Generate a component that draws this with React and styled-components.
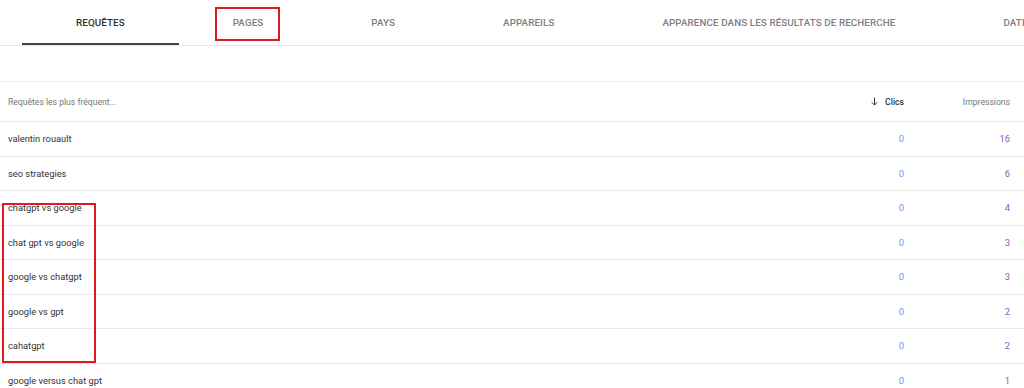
import React from "react";
import styled, { createGlobalStyle } from "styled-components";

const Global = createGlobalStyle`
  html, body { margin: 0; padding: 0; background: #fff; }
  body { font-family: Roboto, "Liberation Sans", Arial, sans-serif; color: #333; overflow: hidden; }
`;

const Page = styled.div`
  position: relative;
  width: 1024px;
  height: 388px;
  overflow: hidden;
  background: #fff;
`;

const TabBar = styled.div`
  display: flex;
  height: 45px;
  padding-left: 22px;
  border-bottom: 1px solid #e6e6e6;
  white-space: nowrap;
  overflow: hidden;
`;

const Tab = styled.div`
  flex: none;
  display: flex;
  align-items: center;
  justify-content: center;
  padding: 0 54px;
  font-size: 9.8px;
  font-weight: 500;
  letter-spacing: 0.1px;
  text-transform: uppercase;
  color: ${(p) => (p.$active ? "#333" : "#808080")};
  box-shadow: ${(p) => (p.$active ? "inset 0 -2px 0 #444" : "none")};
`;

const Spacer = styled.div`
  height: 35px;
`;

const Table = styled.div`
  border-top: 1px solid #ececec;
`;

const Row = styled.div`
  display: grid;
  grid-template-columns: 1fr 120px 106px;
  align-items: center;
  height: ${(p) => (p.$head ? "39px" : "33.5px")};
  padding: 0 14px 0 8px;
  border-bottom: 1px solid #e9e9e9;
`;

const HeadLabel = styled.div`
  font-size: 8.6px;
  color: ${(p) => (p.$bold ? "#333" : "#777")};
  font-weight: ${(p) => (p.$bold ? 500 : 400)};
  display: flex;
  align-items: center;
  justify-content: ${(p) => (p.$right ? "flex-end" : "flex-start")};
  gap: 7px;
`;

const Query = styled.div`
  font-size: 9.3px;
  color: #333;
`;

const Num = styled.div`
  font-size: 9.4px;
  text-align: right;
  color: ${(p) => p.$color};
`;

const Annot = styled.div`
  position: absolute;
  border: 2px solid #e3171e;
  left: ${(p) => p.$x}px;
  top: ${(p) => p.$y}px;
  width: ${(p) => p.$w}px;
  height: ${(p) => p.$h}px;
  box-sizing: border-box;
  pointer-events: none;
`;

const tabs = [
  "Requêtes",
  "Pages",
  "Pays",
  "Appareils",
  "Apparence dans les résultats de recherche",
  "Dates",
];

const rows = [
  ["valentin rouault", 0, 16],
  ["seo strategies", 0, 6],
  ["chatgpt vs google", 0, 4],
  ["chat gpt vs google", 0, 3],
  ["google vs chatgpt", 0, 3],
  ["google vs gpt", 0, 2],
  ["cahatgpt", 0, 2],
  ["google versus chat gpt", 0, 1],
];

const Arrow = () => (
  <svg width="7" height="9" viewBox="0 0 14 18" aria-hidden="true">
    <path d="M7 1v15M1.5 10.5L7 16l5.5-5.5" stroke="#333" strokeWidth="2" fill="none" />
  </svg>
);

export default function App() {
  return (
    <Page>
      <Global />
      <TabBar>
        {tabs.map((t, i) => (
          <Tab key={t} $active={i === 0}>
            {t}
          </Tab>
        ))}
      </TabBar>
      <Spacer />
      <Table>
        <Row $head>
          <HeadLabel>Requêtes les plus fréquent...</HeadLabel>
          <HeadLabel $right $bold>
            <Arrow />
            Clics
          </HeadLabel>
          <HeadLabel $right>Impressions</HeadLabel>
        </Row>
        {rows.map(([q, c, imp]) => (
          <Row key={q}>
            <Query>{q}</Query>
            <Num $color="#5e97f6">{c}</Num>
            <Num $color="#9c4fc7">{imp}</Num>
          </Row>
        ))}
      </Table>
      <Annot $x={215} $y={7} $w={65} $h={34} />
      <Annot $x={2} $y={203} $w={94} $h={160} />
    </Page>
  );
}
